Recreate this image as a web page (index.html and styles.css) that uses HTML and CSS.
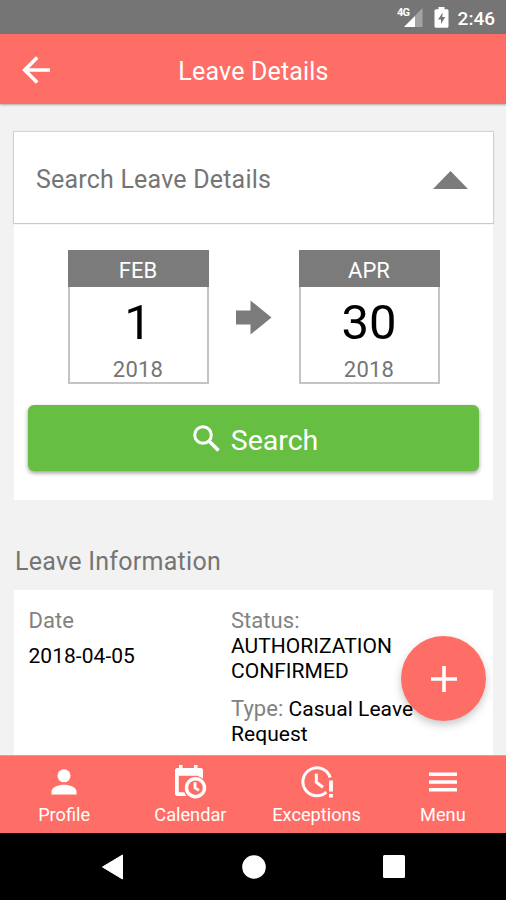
FILE: index.html
```html
<!DOCTYPE html>
<html lang="en">
<head>
<meta charset="utf-8">
<title>Leave Details</title>
<link rel="stylesheet" href="styles.css">
</head>
<body>
<div class="phone">
  <div class="status-bar">
    <svg class="signal" width="26" height="22" viewBox="0 0 26 22">
      <path d="M25.500 2v19H7z" fill="#a3a3a3"/>
      <path d="M18 10v11H7z" fill="#fff"/>
      <text class="signal-label" x="0" y="10">4G</text>
    </svg>
    <svg class="battery" width="15" height="21" viewBox="0 0 15 21">
      <path fill="#fff" fill-rule="evenodd" d="M4.500 0h6v2.300h2.500q1.500 0 1.500 1.500v15.500q0 1.500-1.500 1.500H2q-1.500 0-1.500-1.500V3.800Q.5 2.300 2 2.300h2.500zM8.700 5.500 4 12.500h3v4.500l4.200-7H8.300z"/>
    </svg>
    <span class="clock">2:46</span>
  </div>

  <header class="app-bar">
    <svg class="back" width="28" height="28" viewBox="0 0 28 28" fill="none" stroke="#fff" stroke-width="3.600">
      <path d="M28 14H2.500M15.200 1.500 2.700 14l12.500 12.500"/>
    </svg>
    <h1 class="app-title">Leave Details</h1>
  </header>

  <main class="content">
    <section class="search-card">
      <div class="search-head">
        <span class="search-title">Search Leave Details</span>
        <svg width="35" height="18" viewBox="0 0 35 18"><path d="M17.500 0 35 18H0z" fill="#7b7b7b"/></svg>
      </div>
      <div class="dates">
        <div class="date-box">
          <div class="month">FEB</div>
          <div class="day">1</div>
          <div class="year">2018</div>
        </div>
        <svg class="arrow" width="36" height="36" viewBox="0 0 36 36"><path d="M0 11.500h14.500V1.500l21 17-21 17V25.500H0z" fill="#7b7b7b"/></svg>
        <div class="date-box">
          <div class="month">APR</div>
          <div class="day">30</div>
          <div class="year">2018</div>
        </div>
      </div>
      <button class="search-button" type="button">
        <svg width="27" height="27" viewBox="0 0 27 27" fill="none" stroke="#fff" stroke-width="3"><circle cx="10" cy="10" r="8.300"/><path d="m16 16 9.500 9.500" stroke-width="3.600"/></svg>
        <span>Search</span>
      </button>
    </section>

    <h2 class="section-title">Leave Information</h2>

    <section class="leave-card">
      <div class="leave-date">
        <div class="label">Date</div>
        <div class="date-value">2018-04-05</div>
      </div>
      <div class="leave-info">
        <p class="line"><span class="label">Status:</span><br>AUTHORIZATION<br>CONFIRMED</p>
        <p class="line"><span class="label">Type:</span> Casual Leave<br>Request</p>
      </div>
    </section>
    <button class="fab" type="button" aria-label="Add">
      <svg width="26" height="26" viewBox="0 0 26 26" stroke="#fff" stroke-width="3.600"><path d="M13 0v26M0 13h26"/></svg>
    </button>
  </main>

  <nav class="tabs">
    <a class="tab">
      <svg width="34" height="34" viewBox="0 0 34 34" fill="#fff"><circle cx="17" cy="10.800" r="6.500"/><path d="M4.500 29.500v-3c0-4.500 7-6.800 12.500-6.800s12.500 2.300 12.500 6.800v3z"/></svg>
      <span>Profile</span>
    </a>
    <a class="tab">
      <svg width="34" height="34" viewBox="0 0 34 34">
        <path fill="#fff" fill-rule="evenodd" d="M6 0h3.500v3H21V0h3.500v3H27q3 0 3 3v25H5q-3 0-3-3V6q0-3 3-3h1zM5.500 10.500v17h20v-17z"/>
        <circle cx="22.500" cy="23" r="12" fill="#ff6e66"/>
        <path fill="#fff" d="M2 28V6q0-3 3-3h22q3 0 3 3v7q-1.500-1.500-3.500-2.500H5.500v17h6V31H5q-3 0-3-3z"/>
        <circle cx="22.500" cy="22.700" r="9" fill="#ff6e66" stroke="#fff" stroke-width="3.400"/>
        <path d="M22 17.200v5.600l3.900 2.600" fill="none" stroke="#fff" stroke-width="2.800"/>
      </svg>
      <span>Calendar</span>
    </a>
    <a class="tab">
      <svg width="34" height="34" viewBox="0 0 34 34" fill="none" stroke="#fff" stroke-width="3">
        <path d="M30.200 12.500A14 14 0 1 0 26.300 27.200M16.300 8.500v8.800l6.700 5" />
        <path d="M31 15.500v11M31 29v3.500" stroke-width="3.800"/>
      </svg>
      <span>Exceptions</span>
    </a>
    <a class="tab">
      <svg width="34" height="34" viewBox="0 0 34 34" stroke="#fff" stroke-width="3.600"><path d="M3 9.200h28M3 17h28M3 24.700h28"/></svg>
      <span>Menu</span>
    </a>
  </nav>

  <div class="system-nav">
    <svg width="24" height="26" viewBox="0 0 24 26"><path d="M21.500 1v24L1.500 13z" fill="#fff" stroke="#fff" stroke-linejoin="round"/></svg>
    <svg width="24" height="24" viewBox="0 0 24 24"><circle cx="12" cy="12" r="11.800" fill="#fff"/></svg>
    <svg width="22" height="23" viewBox="0 0 22 23"><rect width="22" height="23" rx="1.500" fill="#fff"/></svg>
  </div>
</div>
</body>
</html>
```
FILE: styles.css
```css
* {
  box-sizing: border-box;
}

body {
  margin: 0;
  font-family: Roboto, "Liberation Sans", sans-serif;
}

h1, h2, p {
  margin: 0;
  font-weight: 400;
}

button {
  border: 0;
  padding: 0;
  font: inherit;
  color: #fff;
}

svg {
  display: block;
  flex: none;
}

.phone {
  width: 506px;
  height: 900px;
  display: flex;
  flex-direction: column;
  overflow: hidden;
  background: #f2f2f2;
}

.status-bar {
  flex: none;
  height: 34px;
  display: flex;
  align-items: center;
  justify-content: flex-end;
  padding-right: 11px;
  background: #757575;
  color: #fff;
}

.signal {
  margin: 0 11px 0 0;
}

.signal-label {
  font-size: 11px;
  font-weight: 700;
  letter-spacing: -.8px;
  fill: #fff;
}

.battery {
  margin-right: 9px;
}

.clock {
  font-size: 19px;
  font-weight: 500;
  line-height: 22px;
  padding-top: 3px;
}

.app-bar {
  flex: none;
  height: 70px;
  display: grid;
  grid-template-columns: 50px 1fr 50px;
  align-items: center;
  background: #ff6e66;
  color: #fff;
  box-shadow: 0 1px 2px rgba(0, 0, 0, .3);
}

.back {
  margin: 1px 0 0 22px;
}

.app-title {
  font-size: 25px;
  line-height: 30px;
  padding: 5px 0 0 1px;
  letter-spacing: .17px;
  text-align: center;
}

.content {
  flex: 1;
  min-height: 0;
  position: relative;
  padding: 28px 13px 0 14px;
}

.search-card {
  height: 368px;
  background: #fff;
}

.search-head {
  height: 91px;
  display: flex;
  align-items: center;
  justify-content: space-between;
  padding: 4px 25px 0 22px;
  box-shadow: 0 0 1px 1px rgba(0, 0, 0, .12), 0 1px 1px rgba(0, 0, 0, .1);
  color: #757575;
}

.search-title {
  font-size: 25px;
  letter-spacing: .2px;
}

.dates {
  display: flex;
  align-items: center;
  justify-content: center;
  gap: 27px;
  padding-top: 27px;
}

.date-box {
  width: 141px;
  height: 134px;
  border: 2px solid #c4c4c4;
  border-top: 0;
  text-align: center;
}

.month {
  margin: 0 -2px;
  height: 37px;
  padding-top: 3px;
  background: #7b7b7b;
  color: #fff;
  font-size: 22px;
  line-height: 36px;
}

.day {
  height: 69px;
  font-size: 49px;
  line-height: 72px;
  color: #000;
}

.year {
  font-size: 22px;
  line-height: 28px;
  letter-spacing: .2px;
  color: #757575;
}

.search-button {
  display: flex;
  width: 451px;
  height: 66px;
  margin: 21px 14px 0;
  padding-left: 4px;
  align-items: center;
  justify-content: center;
  gap: 11px;
  border-radius: 6px;
  background: #66be42;
  box-shadow: 0 2px 4px rgba(0, 0, 0, .4);
  font-size: 28.500px;
}

.search-button span {
  padding-top: 4px;
}

.section-title {
  margin: 46px 0 13px 1px;
  font-size: 25px;
  line-height: 31px;
  letter-spacing: .27px;
  color: #757575;
}

.leave-card {
  height: 220px;
  display: grid;
  grid-template-columns: 202.500px 1fr;
  padding: 18px 14px 0 14.500px;
  background: #fff;
  font-size: 21px;
  line-height: 25.200px;
  letter-spacing: .04px;
  white-space: nowrap;
}

.label {
  font-size: 22px;
  color: #828282;
}

.date-value {
  margin-top: 11px;
}

.line + .line {
  margin-top: 11px;
}

.fab {
  position: absolute;
  right: 20px;
  bottom: 34px;
  width: 85px;
  height: 85px;
  display: grid;
  place-items: center;
  border-radius: 50%;
  background: #ff6e66;
  box-shadow: 0 4px 8px rgba(0, 0, 0, .22);
}

.tabs {
  position: relative;
  flex: none;
  height: 78px;
  display: grid;
  grid-template-columns: repeat(4, 1fr);
  padding-left: 1px;
  border-top: 1px solid #ff8f89;
  background: #ff6e66;
  color: #fff;
}

.tab {
  display: flex;
  flex-direction: column;
  align-items: center;
  padding-top: 9px;
  font-size: 18.200px;
  line-height: 22px;
}

.tab span {
  margin-top: 5px;
}

.system-nav {
  position: relative;
  flex: none;
  height: 67px;
  display: flex;
  align-items: center;
  justify-content: space-between;
  padding: 0 101px;
  background: #000;
}
```
